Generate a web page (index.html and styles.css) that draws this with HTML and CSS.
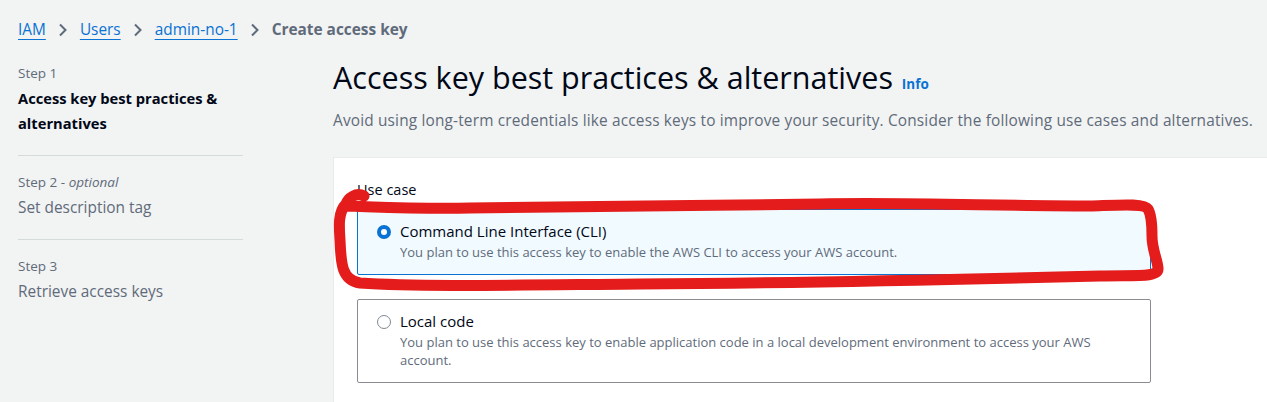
FILE: index.html
```html
<!DOCTYPE html>
<html lang="en">
<head>
<meta charset="utf-8">
<title>Create access key</title>
<link rel="stylesheet" href="styles.css">
</head>
<body>
<div class="app">
  <nav class="breadcrumbs">
    <a class="crumb-link" href="#">IAM</a>
    <svg class="chev" width="10" height="14" viewBox="0 0 10 14"><path d="M2 1.5 L7.5 7 L2 12.5" fill="none" stroke="#5f6b7a" stroke-width="2"/></svg>
    <a class="crumb-link" href="#">Users</a>
    <svg class="chev" width="10" height="14" viewBox="0 0 10 14"><path d="M2 1.5 L7.5 7 L2 12.5" fill="none" stroke="#5f6b7a" stroke-width="2"/></svg>
    <a class="crumb-link" href="#">admin-no-1</a>
    <svg class="chev" width="10" height="14" viewBox="0 0 10 14"><path d="M2 1.5 L7.5 7 L2 12.5" fill="none" stroke="#5f6b7a" stroke-width="2"/></svg>
    <span class="crumb-current">Create access key</span>
  </nav>

  <div class="layout">
    <aside class="steps">
      <div class="step">
        <div class="step-label">Step 1</div>
        <div class="step-title active">Access key best practices &amp; alternatives</div>
      </div>
      <div class="step">
        <div class="step-label">Step 2 - <i>optional</i></div>
        <div class="step-title">Set description tag</div>
      </div>
      <div class="step last">
        <div class="step-label">Step 3</div>
        <div class="step-title">Retrieve access keys</div>
      </div>
    </aside>

    <main class="main">
      <h1 class="title">Access key best practices &amp; alternatives <a class="info" href="#">Info</a></h1>
      <p class="subtitle">Avoid using long-term credentials like access keys to improve your security. Consider the following use cases and alternatives.</p>

      <section class="container">
        <div class="label">Use case</div>
        <div class="tiles">
          <label class="tile selected">
            <span class="radio on"></span>
            <span class="tile-text">
              <span class="tile-title">Command Line Interface (CLI)</span>
              <span class="tile-desc">You plan to use this access key to enable the AWS CLI to access your AWS account.</span>
            </span>
          </label>
          <label class="tile">
            <span class="radio"></span>
            <span class="tile-text">
              <span class="tile-title">Local code</span>
              <span class="tile-desc">You plan to use this access key to enable application code in a local development environment to access your AWS account.</span>
            </span>
          </label>
        </div>
      </section>
    </main>
  </div>

  <svg class="annotation" width="1267" height="402" viewBox="0 0 1267 402">
    <path d="M364 196 C356 192 348 198 346 204 C338 212 339 226 340 240 C341 262 341 280 360 283 C420 287 520 285 640 284 C800 283 980 279 1100 276 C1135 275 1159 278 1158 268 C1157 258 1152 250 1152 236 C1152 224 1151 214 1148 209 C1144 203 1120 205 1090 206 C1000 206 900 202 820 204 C700 206 560 206 470 208 C420 209 380 207 346 206"
      fill="none" stroke="#e41c1c" stroke-width="11" stroke-linecap="round" stroke-linejoin="round"/>
  </svg>
</div>
</body>
</html>
```

FILE: styles.css
```css
* { box-sizing: border-box; }

html, body {
  margin: 0;
  padding: 0;
  background: #f2f3f3;
  font-family: "Open Sans", "Noto Sans", Arial, sans-serif;
  color: #000716;
  overflow: hidden;
}

.app {
  position: relative;
  width: 1267px;
  height: 402px;
}

.breadcrumbs {
  display: flex;
  align-items: center;
  gap: 12px;
  padding: 20px 0 0 18px;
  height: 40px;
  font-size: 15.4px;
  line-height: 20px;
}

.crumb-link {
  color: #0972d3;
  text-decoration: underline;
  text-underline-offset: 4px;
  text-decoration-thickness: 1px;
}

.chev { flex: none; }

.crumb-current {
  color: #5f6b7a;
  font-weight: 700;
}

.layout {
  display: flex;
  gap: 90px;
  padding-left: 18px;
}

.steps {
  width: 225px;
  flex: none;
  padding-top: 24px;
}

.step {
  padding: 17px 0 19px;
  border-bottom: 1px solid #d5dbdb;
}
.step:first-child { padding-top: 0; }
.step.last { border-bottom: none; }

.step-label {
  font-size: 13.5px;
  line-height: 18px;
  color: #5f6b7a;
  margin-bottom: 4px;
}

.step-title {
  font-size: 15.4px;
  line-height: 25px;
  color: #5f6b7a;
}
.step-title.active {
  font-size: 14.7px;
  color: #000716;
  font-weight: 700;
}

.main {
  flex: 1;
  padding-top: 18px;
  min-width: 0;
}

.title {
  margin: 0;
  font-size: 30.5px;
  line-height: 38px;
  height: 38px;
  font-weight: 400;
  color: #000716;
  white-space: nowrap;
}

.info {
  font-size: 13.5px;
  line-height: 0;
  font-weight: 700;
  color: #0972d3;
  text-decoration: none;
  margin-left: 1px;
}

.subtitle {
  margin: 15px 0 0;
  font-size: 15.4px;
  line-height: 20px;
  letter-spacing: 0.17px;
  color: #5f6b7a;
  white-space: nowrap;
}

.container {
  margin-top: 26px;
  background: #ffffff;
  border-top: 1px solid #e9ebed;
  border-left: 1px solid #e9ebed;
  padding: 22px 0 0 23px;
  min-height: 245px;
}

.label {
  font-size: 14.5px;
  line-height: 20px;
  color: #000716;
}

.tiles {
  margin-top: 9px;
  display: flex;
  flex-direction: column;
  gap: 24px;
  width: 794px;
}

.tile {
  display: flex;
  align-items: flex-start;
  gap: 9px;
  padding: 11px 16px 13px 19px;
  border: 1px solid #8c8c94;
  border-radius: 2px;
  background: #ffffff;
}

.tile.selected {
  background: #f1faff;
  border-color: #0972d3;
}

.radio {
  flex: none;
  width: 14px;
  height: 14px;
  margin-top: 4px;
  border-radius: 50%;
  border: 1.5px solid #7d8998;
  background: #ffffff;
}
.radio.on {
  border: 4px solid #0972d3;
}

.tile-text {
  display: flex;
  flex-direction: column;
  padding-right: 40px;
}

.tile-title {
  font-size: 15px;
  line-height: 20px;
  color: #000716;
}

.tile-desc {
  margin-top: 2px;
  font-size: 13px;
  line-height: 18px;
  color: #5f6b7a;
}

.annotation {
  position: absolute;
  left: 0;
  top: 0;
  pointer-events: none;
}
```
